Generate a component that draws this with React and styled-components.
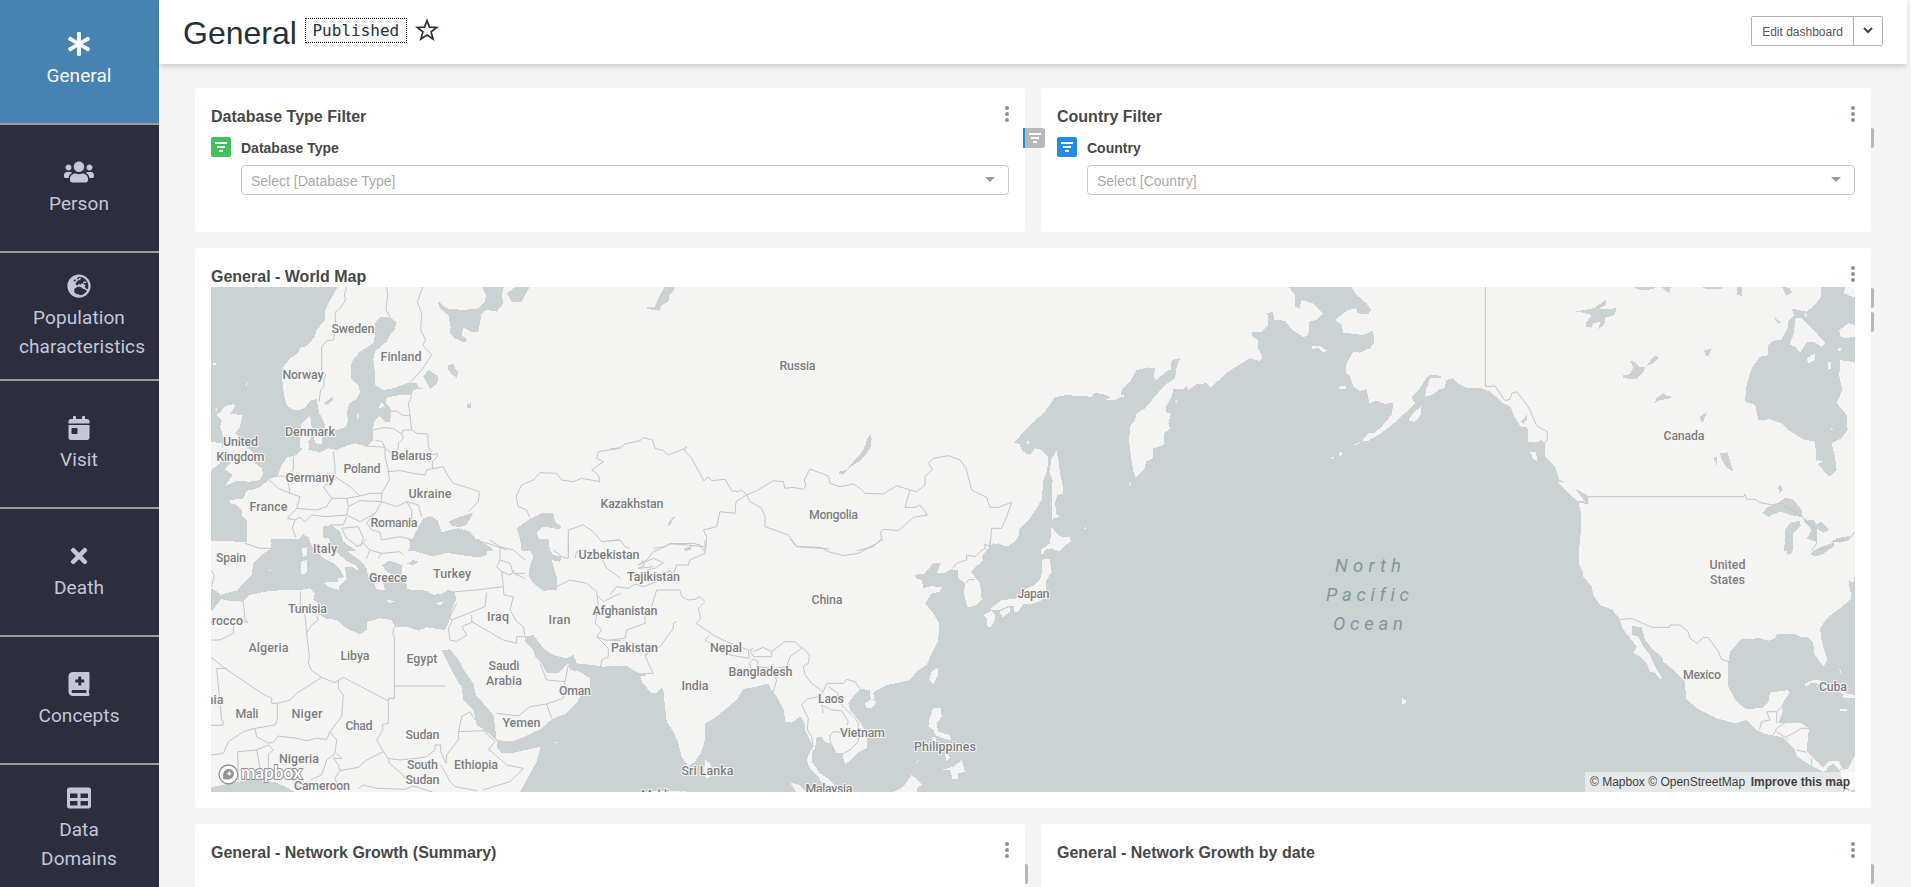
import React from 'react';
import styled, { createGlobalStyle } from 'styled-components';
import {
  FaAsterisk, FaUsers, FaGlobeEurope, FaCalendarDay, FaTimes, FaBookMedical, FaTable,
} from 'react-icons/fa';

const GlobalStyle = createGlobalStyle`
  * { box-sizing: border-box; }
  html, body { margin: 0; height: 100%; overflow: hidden; background: #f4f4f4; }
  body { font-family: "Liberation Sans", Arial, sans-serif; color: #484848; }
`;

const Shell = styled.div`
  display: flex;
  height: 887px;
  width: 1911px;
  overflow: hidden;
`;

const Sidebar = styled.nav`
  flex: 0 0 159px;
  display: flex;
  flex-direction: column;
  overflow: hidden;
  background: #2c2e3e;
`;

const NavItem = styled.a`
  flex: 0 0 ${(p) => (p.$active ? 125 : 128)}px;
  padding: 0 20px ${(p) => (p.$active ? 3 : 0)}px 19px;
  display: flex;
  flex-direction: column;
  justify-content: center;
  gap: 3px;
  border-bottom: 2px solid #9d9d9d;
  background: ${(p) => (p.$active ? '#4783b0' : '#2c2e3e')};
  color: ${(p) => (p.$active ? '#f7f8fa' : '#c3c7d9')};
  font: 400 19px/29px Roboto, sans-serif;
  letter-spacing: 0.08px;
  text-align: center;
`;

const NavIcon = styled.span`
  display: flex;
  justify-content: center;
  align-items: center;
  height: 28px;
  svg { flex: 0 0 30px; width: 30px; height: 24px; }
`;

const Main = styled.main`
  flex: 1;
  min-width: 0;
  display: flex;
  flex-direction: column;
`;

const Header = styled.header`
  flex: 0 0 64px;
  margin-right: 4px;
  padding: 0 24px 0 24px;
  display: flex;
  align-items: flex-start;
  background: #fff;
  box-shadow: 0 4px 5px -1px rgba(0, 0, 0, 0.16);
`;

const Title = styled.h1`
  margin: 15px 8px 0 0;
  font-size: 32px;
  line-height: 37px;
  font-weight: 400;
  color: #263238;
`;

const Status = styled.span`
  margin-top: 18px;
  height: 25px;
  width: 102px;
  border: 1px dotted #000;
  background: #f9f9f9;
  color: #263238;
  font: 16px/23px "DejaVu Sans Mono", monospace;
  text-align: center;
`;

const Star = styled.svg`
  margin: 18px auto 0 8px;
  width: 24px;
  height: 24px;
`;

const ButtonGroup = styled.div`
  display: flex;
  margin-top: 16px;
  height: 30px;
  border: 1px solid #b2b2b2;
  border-radius: 2px;
`;

const EditButton = styled.button`
  width: 102px;
  padding: 2px 0 0;
  border: 0;
  border-right: 1px solid #b2b2b2;
  background: #fff;
  color: #555;
  font: 12px "Liberation Sans", sans-serif;
`;

const CaretButton = styled.button`
  width: 28px;
  padding: 0;
  border: 0;
  background: #fff;
  svg { display: block; margin: -2px auto 0; }
`;

const Grid = styled.div`
  padding: 24px 40px 0 36px;
  display: grid;
  grid-template-columns: 830px 830px;
  grid-template-rows: 144px 560px 144px;
  gap: 16px;
`;

const Card = styled.section`
  position: relative;
  grid-column: ${(p) => (p.$wide ? '1 / -1' : 'auto')};
  padding: 14px 16px 0;
  border-radius: 4px;
  background: #fff;
`;

const CardHeader = styled.div`
  display: flex;
  justify-content: space-between;
  height: 25px;
`;

const CardTitle = styled.h2`
  margin: 5px 0 0;
  font-size: 16px;
  line-height: 20px;
  font-weight: 700;
`;

const Kebab = styled.span`
  display: flex;
  flex-direction: column;
  gap: 2px;
  padding-top: 4px;
  i { width: 4px; height: 4px; border-radius: 2px; background: #879399; }
`;

const FilterRow = styled.div`
  display: flex;
  gap: 10px;
  margin-top: 10px;
`;

const FilterBadge = styled.span`
  flex: 0 0 20px;
  height: 20px;
  display: flex;
  border-radius: 2px;
  background: ${(p) => p.$color};
`;

const FilterBody = styled.div`
  flex: 1;
`;

const FilterLabel = styled.div`
  height: 28px;
  padding-top: 3px;
  font-size: 14px;
  line-height: 16px;
  font-weight: 700;
`;

const Select = styled.div`
  height: 30px;
  padding: 1px 13px 0 9px;
  display: flex;
  align-items: center;
  justify-content: space-between;
  border: 1px solid #c6c6c6;
  border-radius: 4px;
  color: #aaa;
  font-size: 14px;
`;

const Arrow = styled.span`
  margin-top: -3px;
  border: 5px solid transparent;
  border-top-color: #999;
  border-bottom: 0;
`;

const Tab = styled.span`
  position: absolute;
  z-index: 1;
  left: 100%;
  top: ${(p) => p.$top}px;
  width: 3px;
  height: 20px;
  border-radius: 0 2px 2px 0;
  background: #b8b8b8;
`;

const OpenTab = styled(Tab)`
  left: 828px;
  width: 22px;
  border-radius: 0 3px 3px 0;
  border-left: 2px solid #228be6;
`;

const MapBox = styled.div`
  position: relative;
  height: 505px;
  overflow: hidden;
  background: #f4f4f2;
  > svg { display: block; }
`;

const Attribution = styled.div`
  position: absolute;
  right: 0;
  bottom: 0;
  height: 20px;
  width: 270px;
  padding: 0 5px;
  display: flex;
  justify-content: space-between;
  background: rgba(255, 255, 255, 0.5);
  color: #404040;
  font-size: 12px;
  line-height: 20px;
  white-space: nowrap;
`;

const Label = styled.text`
  font: 500 12.5px Roboto, sans-serif;
  fill: #7d7d7d;
  stroke: #f6f6f6;
  stroke-width: 2px;
  stroke-linejoin: round;
  paint-order: stroke;
  text-anchor: ${(p) => p.$anchor || 'middle'};
`;

const OceanLabel = styled.text`
  font: italic 400 18.5px Roboto, sans-serif;
  font-variant-ligatures: none;
  fill: #849797;
`;

const LogoText = styled.text`
  font: 700 19px Lato, sans-serif;
  fill: #fff;
  stroke: #8d8f8f;
  stroke-width: 2px;
  paint-order: stroke;
`;

/* Each map sheet has its own origin and is stored at three units per pixel. */
const SHEETS = [
  {
    at: [200, 280],
    water: [
      '30,18 415,18 400,45 385,70 375,95 375,120 350,150 343,172 320,198 300,203 295,218 270,235 250,262 247,300 252,345 260,375 275,388 295,390 312,385 335,360 350,358 358,400 370,420 378,450 410,450 438,440 443,425 442,392 448,370 470,357 480,335 475,315 452,295 455,245 480,215 520,190 525,165 525,130 540,112 570,112 588,125 585,150 570,165 560,185 525,215 520,240 525,280 525,315 550,330 580,325 620,310 650,310 655,322 668,325 640,330 635,345 600,345 560,353 558,370 575,390 572,410 570,425 555,425 540,408 525,420 520,440 520,480 500,500 465,490 440,497 410,510 385,505 360,518 330,510 310,505 290,525 260,533 245,555 235,585 205,600 185,618 160,630 140,632 130,655 110,658 88,660 90,670 110,675 125,690 128,710 140,720 140,786 33,782',
      '210,812 215,790 250,786 280,795 310,763 330,775 335,812', '370,740 395,735 420,755 430,785 468,812 390,812 370,770',
      '625,812 645,760 670,715 690,708 712,720 725,758 750,750 775,745 810,755 830,780 870,800 880,812', '745,725 780,710 820,697 800,735 778,742 755,737',
      '950,745 985,720 1025,700 1060,700 1065,725 1085,740 1080,748 1030,740 1010,760 1020,785 1050,812 965,812 960,775',
      '712,62 740,85 790,90 835,85 855,65 858,45 845,18 912,18 905,45 910,70 890,95 860,90 845,100 835,155 815,155 790,143 785,165 803,180 795,188 765,175 750,160 752,140 745,105 720,85',
      '920,40 950,18 990,18 965,65 935,65', '670,290 685,270 715,290 712,310 690,327 682,310', '745,255 762,252 768,270 775,275 770,293 757,285 745,270',
      '800,372 812,370 815,382 803,386', '372,370 398,350 398,362 380,375',
    ],
    land: [
      '100,373 75,378 62,395 50,405 65,420 60,440 70,470 68,510 95,520 90,550 75,568 98,585 75,618 110,603 150,605 180,600 190,582 185,565 165,550 160,520 140,500 125,475 105,460 118,445 128,405 90,402 105,378',
      '33,485 65,490 70,520 60,550 33,570', '300,505 298,460 305,430 330,408 335,440 342,462 325,485 328,508', '342,470 368,472 365,492 345,490',
      '470,405 478,395 478,410 470,420', '535,385 545,365 555,380 540,385', '45,390 52,382 52,395', '135,315 144,307 140,320', '38,248 47,248 47,255 38,255',
    ],
    border: [
      '440,21 433,45 437,60 420,85 405,97 407,130 405,160 400,180 380,182 365,200 365,270 377,285 372,300 372,320 362,330 357,365', '560,21 563,45 558,90 570,110',
      '668,21 652,65 665,100 662,150 677,180 668,195 695,225 665,270 630,308', '635,348 625,370 630,405 635,450 650,460 683,462 685,500 697,525 712,520 712,530 697,545 697,565',
      '575,395 590,392 605,405 630,408', '520,450 550,443 580,445 605,462 610,450 635,450', '605,462 610,475 595,490 595,505 575,520 555,505 547,485 525,480',
      '500,498 555,502 555,530 565,570 568,600 545,640 545,665', '562,575 600,572 640,580 675,585 680,570 730,560 742,585 760,610 800,622 838,635 835,665 805,695',
      '400,515 405,560 405,590 450,620 480,648 510,640 545,640', '280,530 280,570 262,590 270,640 300,650 290,685', '405,598 370,620 395,655 380,680 350,690 290,685', '395,655 440,655 480,648',
      '205,598 235,625 270,640', '205,590 240,588 265,590', '290,685 262,715 285,720 300,712 315,725 335,705 375,710 440,705 445,680 440,655', '285,720 277,745 288,772', '440,705 480,725 525,700 545,665 590,680 620,665 635,690 635,720',
      '545,665 480,662 445,680', '525,700 500,728 515,750 540,757 545,780 600,770 640,780', '620,665 655,675 665,710', '425,745 475,740 490,775 480,800', '425,745 440,775 475,800', '390,735 430,735 440,710', '135,790 180,805 215,805',
      '990,715 980,690 955,680 948,650 965,615 1000,600 1020,578 1070,580 1085,600 1120,605 1145,595 1200,605 1195,585 1175,570 1210,545 1190,535 1195,515 1260,505',
      '1105,812 1105,750 1150,735 1180,755 1205,785 1260,780', '830,782 880,795 920,810',
    ],
  },
  {
    at: [200, 540],
    water: [
      '33,145 60,160 65,175 50,195 33,215', '58,168 75,160 110,152 130,130 155,105 160,70 185,45 218,22 212,-3 415,-3 425,15 450,40 485,65 500,85 505,110 520,125 530,148 555,150 550,130 555,110 580,105 560,95 545,75 570,62 605,75 605,100 618,120 622,148 650,150 680,152 700,165 730,160 742,150 765,155 768,180 755,210 745,250 735,270 680,262 655,272 620,260 585,260 575,240 540,235 502,245 500,270 480,283 440,265 410,240 375,235 345,215 355,190 340,180 345,160 330,145 300,150 250,150 195,155 150,165 130,185 100,183 70,180',
      '618,72 640,60 655,65 640,75', '628,-3 630,20 650,35 700,50 740,38 780,45 835,52 862,45 862,20 835,-3',
      '965,-3 985,20 1000,50 990,75 985,105 1000,130 1030,152 1070,150 1072,115 1060,80 1055,60 1080,65 1085,50 1060,45 1050,30 1045,-3',
      '725,330 750,328 775,358 795,395 820,430 828,465 850,490 880,525 885,560 890,600 930,605 970,592 1020,568 1060,535 1100,520 1130,490 1145,460 1170,440 1170,415 1140,395 1110,390 1105,370 1095,380 1075,400 1040,398 1025,370 1005,350 1000,330 975,305 975,290 1000,285 1015,305 1035,330 1060,345 1100,355 1120,345 1130,370 1180,375 1210,380 1265,377 1265,757 960,757 985,710 1010,665 1022,620 985,628 935,640 905,640 890,620 890,605 865,580 830,555 820,510 790,480 785,445 760,400 745,370',
      '33,742 100,728 160,718 230,728 265,745 285,757 33,757',
    ],
    land: [
      '325,-6 340,25 355,40 375,57 405,72 422,90 432,112 415,115 415,140 440,118 435,80 455,80 475,92 470,78 440,62 412,40 395,15 385,-6', '305,25 320,22 320,45 310,50', '303,65 322,60 322,95 308,105 303,95', '370,128 418,125 416,150 385,140',
      '560,180 588,183 570,189', '708,190 735,183 720,196', '205,90 215,90 210,96', '1065,605 1074,605 1074,609 1065,609', '775,430 785,440 775,440',
    ],
    border: [
      '765,155 830,150 910,140 905,95', '860,158 855,200 755,240', '910,140 912,165 940,170 930,210 950,245 970,260 975,290 950,290 950,310 910,300 815,245 815,225', '820,245 785,260 800,285 770,305 750,300 745,265 755,245 750,230 770,190',
      '870,0 900,20 900,60 930,70 940,100 975,100', '900,20 940,30 975,60', '900,60 890,80 905,95 930,105 945,90', '940,100 975,115',
      '1070,140 1110,120 1160,130 1190,155 1195,200 1185,250 1205,270 1190,290 1225,325 1225,350 1205,360 1202,380', '1105,0 1105,55 1085,50 1060,30', '1125,55 1130,35 1160,30', '1190,165 1210,185 1250,165 1262,160', '1190,290 1215,300 1262,302', '1200,45 1220,85 1262,115',
      '890,520 955,528 990,500 1040,492 1090,475 1095,425 1040,420 1020,370', '1040,492 1055,535', '1095,425 1105,375',
      '302,155 300,205 315,225 320,280 328,350 325,370 335,392 365,412', '320,280 335,255 355,240 350,228', '33,352 75,385 182,458 215,475 215,490 232,490 270,480 290,460 365,412 405,428 430,412 565,483 565,475 583,475 583,290 578,280 583,260', '583,438 735,438',
      '50,385 80,385', '50,385 65,540 70,545 68,556 33,556', '232,490 232,540 225,555 165,565 130,575 85,605 70,640 33,645', '415,420 415,445 430,465 425,530 390,575 410,600 405,640 380,660 365,705 330,720',
      '390,575 380,598 350,595 320,602 290,595 235,588 222,605 205,610 170,590 165,565', '565,485 565,550 548,553 548,570 530,600 550,635 500,660 475,682 420,692 415,675 400,655 425,655 410,640',
      '550,635 565,655 600,660 650,655 680,650 705,630 705,615 722,615 722,635 738,670 740,645 775,600 775,580 785,530 810,515 825,540', '775,575 850,572 885,605', '885,605 865,630 875,635 920,675 970,685 930,725 880,740 850,750', '722,675 740,705 750,725 765,740 830,752', '565,655 568,670 610,705 615,715 660,735', '475,745 490,735 530,745 615,748 640,738 700,757', '420,692 405,715 420,757',
      '130,185 135,240 145,247 130,245', '100,250 100,280 80,290 60,300 33,300', '115,720 113,635 170,630 185,710', '170,630 205,615 220,630 205,645 205,710', '33,90 43,105 35,140', '490,10 510,30 545,40 600,35 610,45', '470,20 490,10 500,-3', '510,30 500,55', '545,40 535,55',
    ],
  },
  {
    at: [610, 280],
    water: [
      '165,18 192,18 190,35 178,45 175,65 155,75 148,92 130,90 110,85 115,80 135,80 145,55', '780,462 785,475 782,500 768,525 745,545 720,562 700,583 685,580 688,575 710,570 730,545 750,525 765,500 770,480',
      '200,705 180,720 172,738 182,735 188,720', '1263,442 1235,465 1213,488 1235,495 1240,512 1250,523 1263,512', '1263,720 1235,755 1215,785 1190,800 1165,790 1150,797 1140,812 1263,812',
    ],
    land: [],
    border: [
      '0,507 32,503 45,492 90,482 100,473 128,480 135,505 160,512 175,525 220,507 230,500 222,510 245,535 282,603 295,590 305,602 345,598 365,632 385,635 395,630 410,645 440,632 490,602 520,605 525,625 550,622 580,628 588,618 583,600 600,567 655,588 660,610 690,620 730,612 750,625 765,640 820,642 860,617 900,630 920,635 945,615 945,590 968,568 955,550 970,535 1015,527 1050,540 1068,565 1085,630 1130,652 1140,682 1165,682 1205,667 1190,710 1175,745 1145,745 1140,800',
      '410,645 420,665 455,685 465,710 465,740 535,765 560,800 660,807', '740,812 790,800 815,775 812,755 820,748 865,752 885,735 910,712 953,705 930,675 915,682 885,682 900,630', '410,645 378,665 375,700 330,695 320,740 280,750 290,770 287,810', '0,782 30,780 45,800 60,805', '130,805 165,800 180,790 260,798 285,800',
    ],
  },
  {
    at: [610, 540],
    water: [
      '-3,377 50,377 65,388 90,400 115,405 90,410 98,430 110,443 125,460 140,460 155,443 160,450 165,500 170,545 190,575 205,610 215,650 235,678 255,665 272,640 285,600 285,550 310,537 350,505 380,480 400,447 440,440 475,430 485,450 500,470 522,510 525,545 545,548 570,530 583,545 585,570 597,595 610,620 598,640 590,660 600,685 622,707 640,735 650,757 -3,757',
      '1263,-3 1235,-3 1210,15 1185,18 1150,10 1130,30 1115,50 1120,60 1083,95 1110,130 1115,180 1100,195 1072,202 1062,160 1065,130 1045,115 1045,90 1025,88 1000,100 980,100 992,70 970,68 945,100 915,105 918,115 935,120 940,145 965,138 995,142 990,155 965,160 945,190 970,220 987,250 985,300 965,340 950,375 920,395 900,420 865,428 830,435 800,450 790,460 795,478 782,475 780,450 750,447 730,470 715,490 720,510 745,540 765,570 772,600 770,625 740,640 725,658 705,672 700,655 700,640 680,640 665,612 645,605 635,592 620,592 615,625 605,635 605,665 630,700 660,720 690,757 1263,757',
      '222,25 245,18 242,30 225,33',
    ],
    land: [
      '540,728 570,735 590,757 560,757', '848,757 880,740 905,705 937,733 920,745 922,757', '985,382 985,405 970,432 958,418 965,395', '765,490 785,477 800,485 785,505 768,503',
      '970,503 993,505 995,530 980,550 985,575 1000,580 1020,600 1000,595 975,585 972,570 955,560 958,540', '995,690 1030,680 1055,660 1065,695 1045,700 1045,718 1028,718 1020,690', '1005,640 1022,653 1008,663', '915,670 930,655 925,665', '1000,580 1018,585 1024,600 1010,598', '965,590 975,590 980,603 968,600', '285,660 300,670 310,705 290,717 282,700',
    ],
    border: [
      '540,-3 560,20 630,22 655,35 700,47 745,40 800,10 820,-3', '285,0 285,40 240,60 235,75 200,75 190,105 180,92 150,105', '285,37 270,15 250,10 180,12 155,25 130,35 110,60 85,75 130,55 160,68 135,85 110,90', '0,165 20,140 55,145 75,132 100,140 140,125', '95,60 105,75 85,85 130,80',
      '140,150 180,150 210,150 215,170 235,180 255,178 270,170 285,185 265,205 272,235 258,250 310,285 350,305 415,330 418,355 360,345 320,320 285,300 300,285', '140,150 125,200 105,225 105,250 50,270 45,295 0,300', '105,345 150,320 190,265 190,250 200,245', '105,345 115,370 130,400 95,400', '430,325 420,330 430,350 485,350 485,335 460,322 430,335',
      '485,335 525,305 555,305 575,325 540,350 530,380 490,385 440,380 445,365 430,357 418,370 435,410', '575,320 598,345 595,370 580,378 585,405 605,430 640,455 650,430 700,430 710,418 735,425 750,447', '440,380 440,400 490,405 500,420 490,455', '500,415 512,400 530,380',
      '640,455 625,470 590,478 575,495 595,535 592,570 605,590 610,620', '640,520 635,495 665,510 695,512 715,545 712,555', '655,440 685,460 680,475 700,500 735,535 745,550 745,605 720,630 700,640', '660,600 660,585 670,575 710,578', '660,600 670,630', '1028,85 1040,70 1070,60 1070,45 1095,50 1110,35 1125,25 1125,12 1140,20 1140,0', '1068,130 1075,120 1095,118',
    ],
  },
  {
    at: [1020, 280],
    water: [
      '0,468 30,435 75,395 105,352 140,345 170,348 215,350 225,338 260,345 270,352 255,360 285,360 300,352 318,348 303,345 305,330 330,305 350,270 385,262 405,265 402,290 408,302 440,272 453,270 455,240 480,235 470,262 465,295 435,315 400,355 375,385 350,400 345,420 332,435 327,480 333,530 340,575 348,593 372,570 378,545 398,535 400,505 432,495 433,460 450,445 445,430 452,402 437,395 440,375 455,350 460,328 490,328 500,318 505,330 530,312 560,310 573,322 625,275 665,250 690,235 720,243 728,235 715,205 713,180 697,168 697,157 725,155 745,135 742,98 760,97 762,120 795,122 815,148 850,172 865,165 868,125 890,120 908,100 880,70 845,60 838,85 825,80 825,45 803,18 992,18 1010,45 1040,70 1053,90 1045,102 1012,100 1008,85 980,92 945,120 965,135 970,158 1030,165 1060,152 1062,190 1050,205 1020,218 1000,215 980,250 977,275 990,290 1000,320 1020,333 1040,328 1048,370 1070,362 1095,372 1120,368 1115,405 1085,440 1065,458 1045,460 1025,485 1045,482 1080,462 1110,440 1165,390 1185,370 1175,352 1200,325 1215,300 1230,285 1262,287 1262,293 1230,295 1218,330 1215,350 1235,345 1262,327 1262,812 -3,812 -3,750 30,715 65,660 70,600 82,570 85,530 65,510 45,505 30,525 10,515 0,500',
    ],
    land: [
      '108,505 115,540 120,580 130,625 130,640 112,645 105,670 110,705 120,710 100,715 97,722 95,640 98,600 88,575 95,535 105,525', '20,484 27,484 27,492 20,492', '325,612 335,605 328,618', '465,365 477,358 470,368', '875,198 900,198 922,212 910,217 895,205 877,206', '955,320 978,318 978,328 957,328', '1167,415 1185,395 1205,378 1202,405 1185,425 1170,424',
      '997,495 1020,487 1010,495', '933,532 943,530 938,537', '957,518 966,516 964,527 957,526', '192,745 198,740 196,748', '617,542 621,542 621,546 617,546',
    ],
    border: [],
  },
  {
    at: [960, 500],
    water: ['207,110 1443,110 1443,882 207,882'],
    land: [
      '275,80 285,95 305,112 330,112 333,125 315,135 298,155 275,145 258,148 245,165 242,150 270,130', '245,180 268,175 275,215 257,245 258,270 262,285 240,303 215,312 190,312 172,338 162,335 163,318 145,318 120,330 95,330 90,340 95,322 125,300 165,297 200,265 225,255 240,240 247,210',
      '70,345 95,332 105,345 103,365 90,383 80,378 80,355', '118,335 148,320 150,335 128,352', '1326,594 1340,603 1334,611 1326,612', '372,87 378,82 376,90',
    ],
    border: [],
  },
  {
    at: [1440, 280],
    water: [
      '-3,327 15,325 18,300 38,295 55,312 85,325 125,325 150,335 190,370 212,380 220,405 242,440 262,440 265,485 285,488 305,480 315,490 315,530 345,560 358,600 375,605 350,605 385,640 412,662 435,665 405,625 440,645 443,672 415,668 423,700 422,760 417,812 -3,812', '243,425 262,403 260,418 250,432',
      '1142,18 1245,18 1245,247 1200,240 1198,290 1207,330 1190,370 1220,405 1223,450 1205,475 1175,490 1185,530 1190,570 1168,590 1130,550 1125,485 1090,478 1045,450 1025,430 990,418 955,420 945,375 915,365 920,315 935,265 960,230 985,225 985,195 1000,182 1025,180 1045,140 1045,125 1062,105 1055,85 1100,95 1125,75 1143,50',
      '405,95 460,85 498,60 497,75 475,88 528,85 525,105 497,112 492,135 475,147 482,125 460,130 455,143 437,140 440,125 455,105 430,98', '568,240 585,248 600,262 615,262 612,275 590,297 550,295 548,287 570,282 580,262', '620,258 635,235 648,226 656,235 640,250', '793,212 815,205 805,230 795,225', '645,370 648,355 670,340 678,348 695,348 690,355 655,362', '780,410 800,397 790,425 783,428',
      '840,520 862,517 880,575 860,563 845,540', '820,530 832,530 830,555', '1014,622 1022,616 1029,630 1018,638', '968,700 980,682 1010,672 1035,653 1060,658 1085,690 1085,712 1050,705 1020,695 985,710', '1035,750 1050,728 1080,722 1082,738 1060,760 1058,812 1033,812', '1085,715 1100,722 1120,720 1130,732 1145,725 1167,750 1150,758 1130,745 1130,785 1100,777 1115,750', '1175,785 1190,775 1230,768 1225,780 1200,788', '1143,808 1175,798 1160,812 1143,812',
      '570,18 650,18 640,28 600,30', '660,18 692,18 690,38 680,35', '780,18 850,18 845,26 800,28', '892,18 905,18 905,48 892,45', '1025,18 1050,25 1055,38 1040,48', '1000,108 1025,130 1012,128',
    ],
    land: [
      '1067,115 1085,115 1125,155 1157,190 1145,200 1120,185 1100,187 1080,217 1065,200 1048,193 1060,165', '1198,150 1225,130 1245,135 1245,170 1215,175 1200,168', '1100,235 1125,220 1125,240 1105,250', '1215,18 1245,18 1245,52 1230,48 1212,40', '270,515 288,515 292,545 278,535', '1163,248 1172,245 1172,268 1163,265', '1193,205 1205,205 1203,212 1195,212', '1130,540 1150,545 1132,552', '1172,442 1182,450 1172,450', '1095,97 1102,105 1095,112',
    ],
    border: [
      '136,21 136,320 165,318 195,362 210,358 215,340 230,335 265,380 290,437 322,455 322,480 310,492', '443,672 443,650 910,650 915,642 920,658 945,658 960,668 1000,675 1020,668 1085,708 1120,740 1130,790 1115,812', '1140,808 1180,798 1180,785 1225,780 1245,755',
    ],
  },
  {
    at: [1440, 540],
    water: [
      '-3,-3 417,-3 418,75 428,95 430,110 455,140 460,165 480,195 515,208 538,235 550,270 575,300 590,320 580,338 600,350 620,370 630,395 645,398 660,418 665,412 645,380 630,345 610,320 595,290 577,285 577,258 605,262 615,300 640,330 670,355 670,365 700,390 735,425 738,475 770,505 830,535 885,550 920,540 950,570 975,582 1030,592 1065,630 1070,648 1110,675 1150,695 1160,690 1165,678 1180,672 1200,690 1210,730 1208,757 -3,757',
      '865,365 870,335 905,297 960,295 985,302 1003,297 1010,283 1065,282 1085,292 1100,290 1120,308 1122,340 1150,380 1162,360 1145,305 1140,265 1160,235 1200,205 1235,175 1225,120 1240,128 1245,105 1245,645 1225,685 1210,690 1195,662 1170,662 1150,682 1130,665 1105,640 1100,630 1107,565 1085,550 1015,548 1028,515 1025,495 1037,475 1047,460 1045,450 990,458 985,485 970,503 920,508 890,485 865,440', '1033,-3 1058,-3 1055,40 1042,44', '1110,42 1125,30 1145,20 1180,8 1180,20 1150,42 1125,50',
    ],
    land: ['1093,435 1110,422 1140,420 1165,430 1200,455 1245,465 1245,475 1205,472 1212,462 1170,450 1130,430 1112,430 1095,440', '1198,507 1222,507 1220,513 1200,512', '1197,387 1203,393 1202,400'],
    border: [
      '540,238 577,236 635,262 688,262 690,255 720,255 745,275 750,295 772,310 790,292 805,293 835,335 845,358 875,368', '1025,500 1010,515 1010,548', '1010,515 980,515 990,540 965,545 958,570', '1000,585 1010,565 1035,548', '1010,575 1035,592 1060,580 1085,565 1110,565', '1035,592 1045,600', '1070,630 1100,637', '1115,655 1115,680', '1200,690 1215,675',
    ],
  },
];

const LABELS = [
  ['Sweden', 353, 333, 43], ['Finland', 401, 361, 41], ['Norway', 303, 379, 41], ['Denmark', 310, 436, 50], ['United', 240.5, 446, 35], ['Kingdom', 240.5, 461, 48],
  ['Belarus', 411.5, 460, 41], ['Poland', 362, 473, 37], ['Germany', 310, 482, 49], ['Ukraine', 430, 498, 43], ['France', 268.5, 511, 38], ['Romania', 394, 527, 47],
  ['Italy', 325, 553, 24], ['Spain', 231, 562, 30], ['Greece', 388, 582, 38], ['Turkey', 452, 578.5, 38], ['Tunisia', 307.5, 613, 39], ['Algeria', 268.5, 652.5, 40],
  ['Libya', 355, 660, 29], ['Egypt', 422, 663, 31], ['Iraq', 498, 621, 22], ['Iran', 559.5, 624, 22], ['Saudi', 504, 670, 31], ['Arabia', 504, 685.5, 36], ['Oman', 575, 695, 32],
  ['Mali', 247, 718.5, 23], ['Niger', 307, 718, 31], ['Chad', 359, 730, 27], ['Sudan', 422.5, 739, 34], ['Yemen', 521.5, 727, 38], ['Nigeria', 299, 763.5, 40],
  ['South', 422.5, 769, 31], ['Sudan', 422.5, 784, 34], ['Ethiopia', 476, 769, 44], ['Cameroon', 322, 790.5, 56], ['Russia', 797.5, 370, 36], ['Kazakhstan', 632, 508, 63],
  ['Mongolia', 833.5, 519.5, 49], ['Uzbekistan', 609, 559.5, 61], ['Tajikistan', 653.5, 581, 53], ['Afghanistan', 625, 615.5, 65], ['Pakistan', 634.5, 652.5, 47],
  ['China', 827, 604.5, 31], ['Nepal', 726, 652, 32], ['Bangladesh', 760.5, 676.5, 64], ['India', 695, 690, 27], ['Laos', 831, 703.5, 26], ['Vietnam', 862.5, 737, 45],
  ['Philippines', 945, 751.5, 62], ['Sri Lanka', 707.5, 775, 52], ['Malaysia', 829, 793, 47], ['Maldives', 664, 799, 46], ['Japan', 1033.5, 598, 32],
  ['Canada', 1684, 440.5, 41], ['United', 1727.5, 569.5, 36], ['States', 1727.5, 584.5, 35], ['Mexico', 1702, 679, 38], ['Cuba', 1833, 691.5, 28],
];

const OCEAN = [['North', 1335, 572.5, 66], ['Pacific', 1326, 601.5, 83], ['Ocean', 1333, 630.5, 70]];

const place = (at) => `translate(${at[0]} ${at[1]}) scale(0.33333)`;

function WorldMap() {
  return (
    <svg width="1644" height="505" viewBox="211 287 1644 505">
      <rect x="211" y="287" width="1644" height="505" fill="#f4f4f2" />
      <g fill="#cad2d3" shapeRendering="crispEdges">
        {SHEETS.map((s) => (
          <g key={s.at.join()} transform={place(s.at)}>
            {s.water.map((p) => <polygon key={p} points={p} />)}
          </g>
        ))}
      </g>
      <g fill="#f4f4f2" shapeRendering="crispEdges">
        {SHEETS.map((s) => (
          <g key={s.at.join()} transform={place(s.at)}>
            {s.land.map((p) => <polygon key={p} points={p} />)}
          </g>
        ))}
      </g>
      <g fill="none" stroke="#c3c6c6" strokeWidth="3" strokeLinejoin="round">
        {SHEETS.map((s) => (
          <g key={s.at.join()} transform={place(s.at)}>
            {s.border.map((p) => <polyline key={p} points={p} />)}
          </g>
        ))}
      </g>
      {LABELS.map(([t, x, y, w]) => (
        <Label key={t + y} x={x} y={y - 0.5} textLength={w}>{t}</Label>
      ))}
      <Label $anchor="end" x="243" y="624.5" textLength="49">Morocco</Label>
      <Label $anchor="end" x="223.5" y="703.5">Mauritania</Label>
      <Label $anchor="start" x="1842" y="797">Colombia</Label>
      {OCEAN.map(([t, x, y, w]) => (
        <OceanLabel key={t} x={x} y={y - 0.5} textLength={w}>{t}</OceanLabel>
      ))}
      <circle cx="228.4" cy="774.4" r="9.4" fill="#fff" stroke="#939595" strokeWidth="1.3" />
      <path d="M223.3 779.3c-.8-4-.2-7.200 2-9 2.200-1.800 5.400-1.700 7.300.2 1.900 2 1.900 5-.1 6.900-2.100 2-5.200 2.600-9.200 1.900z" fill="#939595" />
      <path d="M229.300 770.700l.9 2 2 .9-2 .9-.9 2-.9-2-2-.9 2-.9z" fill="#fff" />
      <LogoText x="241" y="779" textLength="61" lengthAdjust="spacingAndGlyphs">mapbox</LogoText>
    </svg>
  );
}

function FilterGlyph() {
  return (
    <svg width="20" height="20" viewBox="0 0 20 20">
      <path d="M4 5h12v2H4zM6 9h8v2H6zM8 13h4v2H8z" fill="#fff" />
    </svg>
  );
}

function Panel({ title, wide, tabs, children }) {
  return (
    <Card $wide={wide}>
      <CardHeader>
        <CardTitle>{title}</CardTitle>
        <Kebab><i /><i /><i /></Kebab>
      </CardHeader>
      {children}
      {tabs.map((top) => <Tab key={top} $top={top} />)}
    </Card>
  );
}

function Filter({ color, label }) {
  return (
    <FilterRow>
      <FilterBadge $color={color}><FilterGlyph /></FilterBadge>
      <FilterBody>
        <FilterLabel>{label}</FilterLabel>
        <Select>{`Select [${label}]`}<Arrow /></Select>
      </FilterBody>
    </FilterRow>
  );
}

const NAV = [
  ['General', FaAsterisk], ['Person', FaUsers], ['Population characteristics', FaGlobeEurope], ['Visit', FaCalendarDay],
  ['Death', FaTimes], ['Concepts', FaBookMedical], ['Data Domains', FaTable],
];

export default function App() {
  return (
    <Shell>
      <GlobalStyle />
      <Sidebar>
        {NAV.map(([name, Icon], i) => (
          <NavItem key={name} $active={i === 0}>
            <NavIcon><Icon /></NavIcon>
            {name}
          </NavItem>
        ))}
      </Sidebar>
      <Main>
        <Header>
          <Title>General</Title>
          <Status>Published</Status>
          <Star viewBox="0 0 24 24" fill="none" stroke="#263238" strokeWidth="1.7">
            <path d="M12 2.600l2.500 6.500 7.200.4-5.600 4.400 2 7.100L12 17l-6.100 4 2-7.100-5.600-4.400 7.200-.4z" />
          </Star>
          <ButtonGroup>
            <EditButton>Edit dashboard</EditButton>
            <CaretButton>
              <svg width="10" height="7" viewBox="0 0 10 7" fill="none" stroke="#444" strokeWidth="2"><path d="M1 1l4 4 4-4" /></svg>
            </CaretButton>
          </ButtonGroup>
        </Header>
        <Grid>
          <Panel title="Database Type Filter" tabs={[]}>
            <Filter color="#44c05b" label="Database Type" />
            <OpenTab $top={40}><FilterGlyph /></OpenTab>
          </Panel>
          <Panel title="Country Filter" tabs={[40]}>
            <Filter color="#228be6" label="Country" />
          </Panel>
          <Panel title="General - World Map" wide tabs={[40, 64]}>
            <MapBox>
              <WorldMap />
              <Attribution>
                <span>© Mapbox © OpenStreetMap</span>
                <b>Improve this map</b>
              </Attribution>
            </MapBox>
          </Panel>
          <Panel title="General - Network Growth (Summary)" tabs={[40]} />
          <Panel title="General - Network Growth by date" tabs={[40]} />
        </Grid>
      </Main>
    </Shell>
  );
}
